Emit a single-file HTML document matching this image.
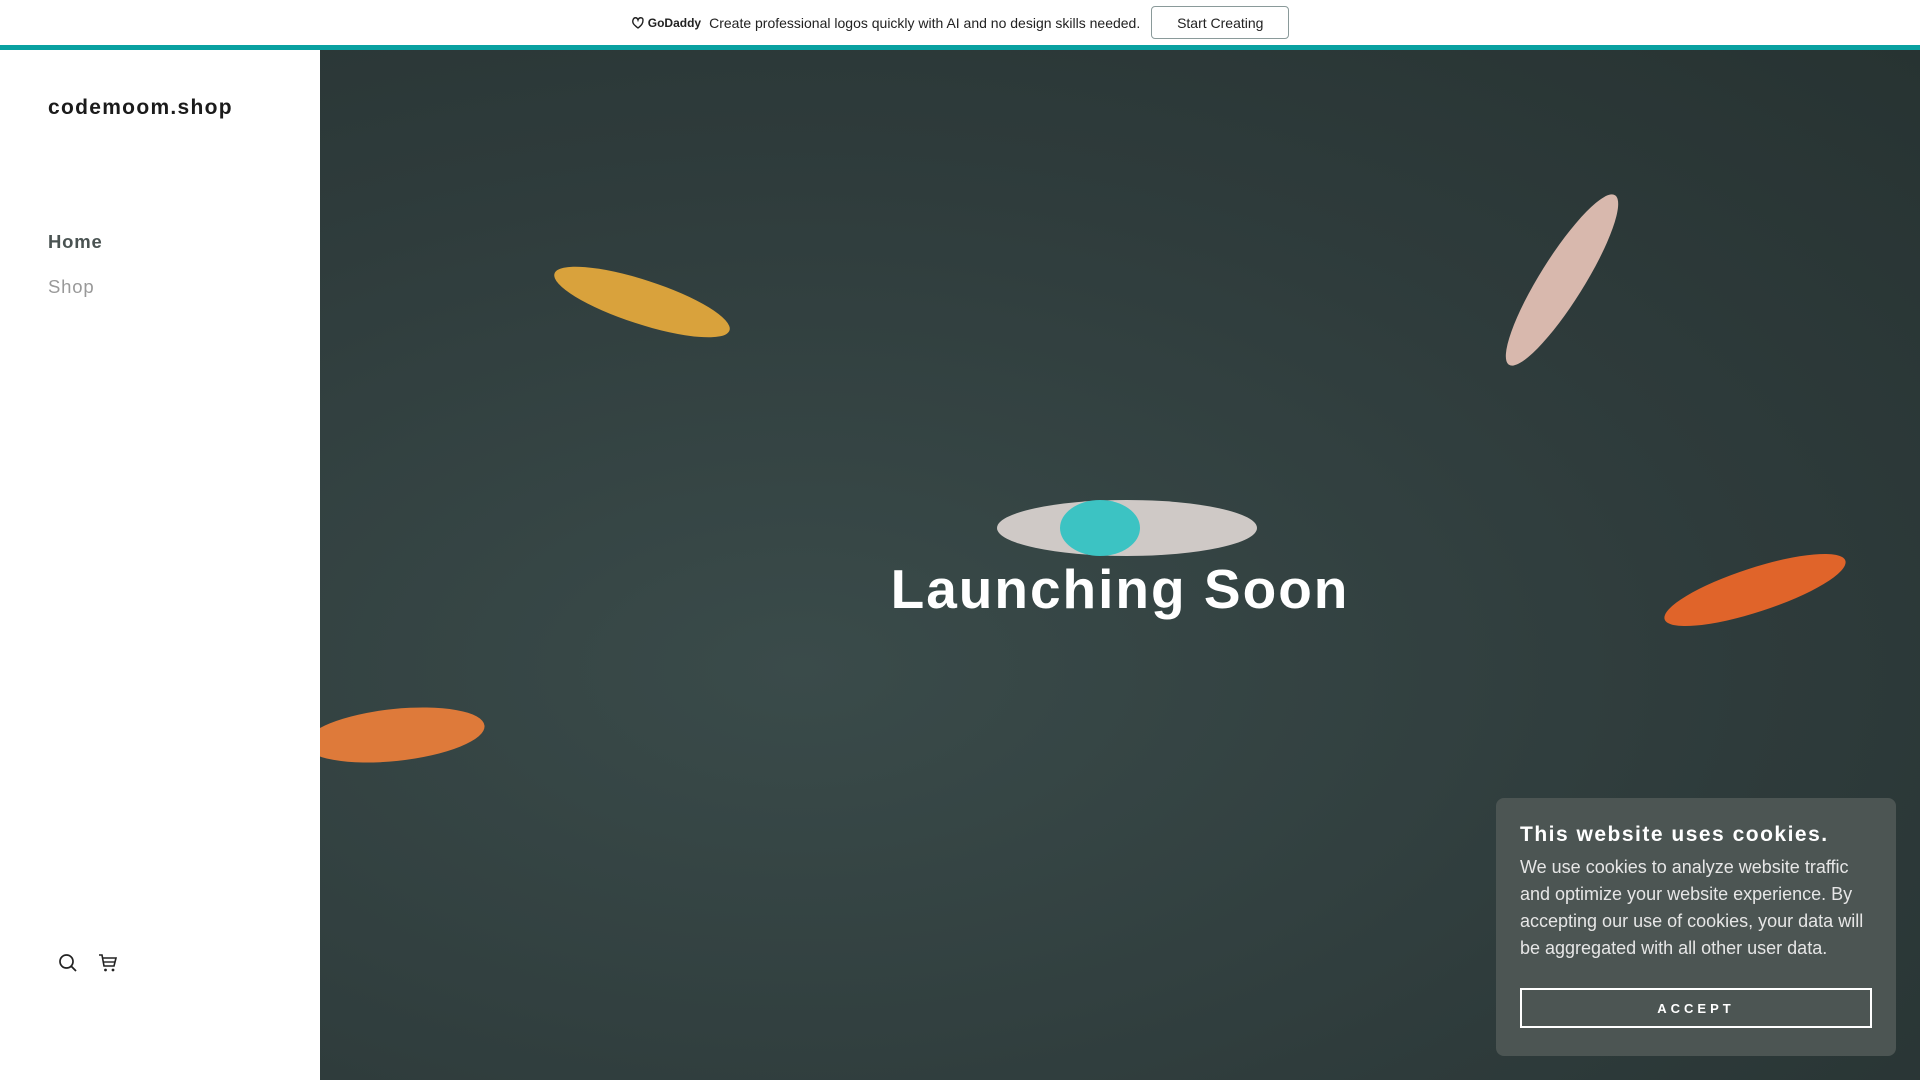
<!DOCTYPE html>
<html><head><meta charset="utf-8"><style>
*{margin:0;padding:0;box-sizing:border-box}
body{width:1920px;height:1080px;overflow:hidden;font-family:"Liberation Sans",sans-serif;background:#fff;position:relative}
.banner{position:absolute;left:0;top:0;width:1920px;height:45px;background:#fff;display:flex;align-items:center;justify-content:center;font-size:14px;color:#222}
.banner .gd{font-weight:bold;font-size:12px;margin-right:8px;display:flex;align-items:center;gap:3px}
.banner .btn{margin-left:11px;border:1px solid #8a9a9a;border-radius:4px;height:33px;width:138px;display:flex;align-items:center;justify-content:center;font-size:14px}
.teal{position:absolute;left:0;top:45px;width:1920px;height:5px;background:#09a1a1}
.side{position:absolute;left:0;top:50px;width:320px;height:1030px;background:#fff}
.logo{position:absolute;left:48px;font-size:21px;font-weight:bold;letter-spacing:1.3px;color:#1b1b1b}
.nav1{position:absolute;left:48px;font-size:18.5px;font-weight:bold;letter-spacing:0.8px;color:#4a5352}
.nav2{position:absolute;left:48px;font-size:18.5px;letter-spacing:0.8px;color:#999}
.hero{position:absolute;left:320px;top:50px;width:1600px;height:1030px;background:radial-gradient(ellipse at 30% 60%,#3a4b4a,#2e3b3b 60%,#273332)}
.h1{position:absolute;left:320px;width:1600px;top:557px;text-align:center;font-size:55px;font-weight:bold;color:#fff;letter-spacing:2px}
.ck{position:absolute;left:1496px;top:798px;width:400px;height:258px;background:#4c5553;border-radius:8px;padding:0 24px;color:#eee}
.ck h2{margin-top:25px;font-size:21px;letter-spacing:1.5px;color:#fff}
.ck p{margin-top:7px;font-size:18px;line-height:27px;color:#e6e6e6}
.ck .acc{position:absolute;left:24px;top:190px;width:352px;height:40px;border:2px solid #fff;display:flex;align-items:center;justify-content:center;font-size:13px;font-weight:bold;letter-spacing:4px;color:#fff}
</style></head><body>
<div class="banner"><span class="gd"><svg width="14" height="13" viewBox="0 0 14 13"><path d="M7 12C3 9 1 7 2 4S6 1 7 4C8 1 12 1 12 4S11 9 7 12Z" fill="none" stroke="#222" stroke-width="1.4"/></svg>GoDaddy</span>Create professional logos quickly with AI and no design skills needed.<span class="btn">Start Creating</span></div>
<div class="teal"></div>
<div class="side">
<div class="logo" style="top:46px">codemoom.shop</div>
<div class="nav1" style="top:181px">Home</div>
<div class="nav2" style="top:226px">Shop</div>
<svg style="position:absolute;left:58px;top:903px" width="20" height="20" viewBox="0 0 20 20"><circle cx="8.5" cy="8.5" r="6.5" fill="none" stroke="#222" stroke-width="1.7"/><path d="M13.5 13.5L18 18" stroke="#222" stroke-width="1.8"/></svg>
<svg style="position:absolute;left:98px;top:903px" width="20" height="20" viewBox="0 0 20 20"><path d="M1 2H4L6 13H16L18 5H5" fill="none" stroke="#222" stroke-width="1.6"/><path d="M6 9H17" stroke="#222" stroke-width="1.4"/><circle cx="7.5" cy="17" r="1.4" fill="#222"/><circle cx="15" cy="17" r="1.4" fill="#222"/></svg>
</div>
<div class="hero">
<svg width="1600" height="1030" style="position:absolute;left:0;top:0">
<ellipse cx="322" cy="252" rx="92" ry="22" transform="rotate(18 322 252)" fill="#d9a23c"/>
<ellipse cx="807" cy="478" rx="130" ry="28" fill="#cfc9c6"/><ellipse cx="780" cy="478" rx="40" ry="28" fill="#3cc3c3"/>
<ellipse cx="1242" cy="230" rx="100" ry="22" transform="rotate(-58 1242 230)" fill="#d8b8ad"/>
<ellipse cx="1435" cy="540" rx="95" ry="22" transform="rotate(-18 1435 540)" fill="#e0642a"/>
<ellipse cx="75" cy="685" rx="90" ry="26" transform="rotate(-6 75 685)" fill="#de7a3a"/>
</svg>
</div>
<div class="h1">Launching Soon</div>
<div class="ck"><h2>This website uses cookies.</h2><p>We use cookies to analyze website traffic and optimize your website experience. By accepting our use of cookies, your data will be aggregated with all other user data.</p><div class="acc">ACCEPT</div></div>
</body></html>
